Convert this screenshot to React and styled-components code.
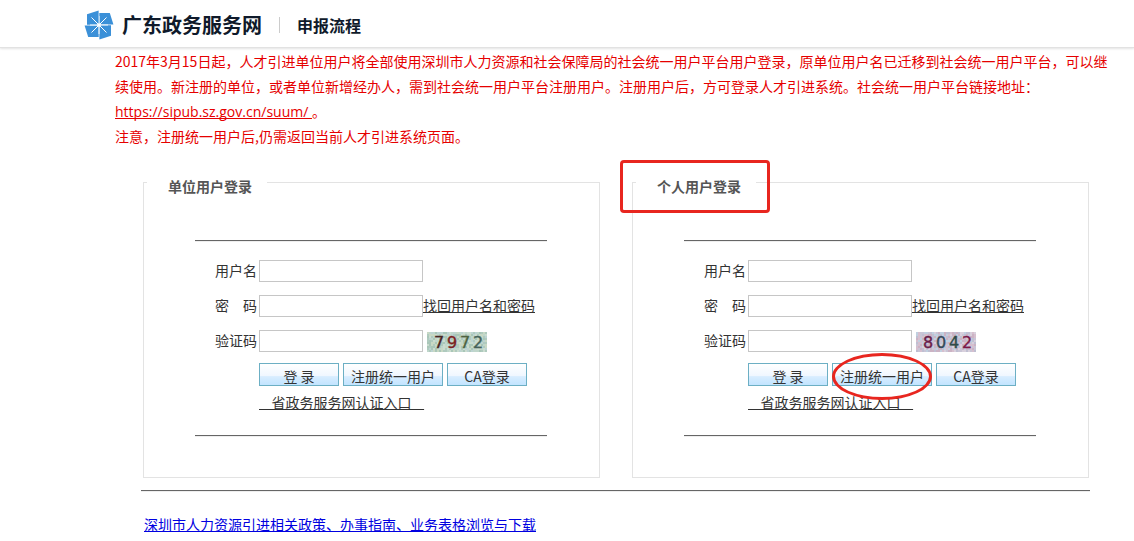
// lib
import React, { Fragment } from "react";
import styled, { createGlobalStyle } from "styled-components";

const GlobalStyle = createGlobalStyle`
  * {
    box-sizing: border-box;
  }
  body {
    margin: 0;
    background: #fff;
    color: #333;
    font-family: "Noto Sans CJK SC", sans-serif;
    font-size: 14px;
    line-height: 20px;
  }
  a {
    text-decoration-skip-ink: none;
    text-underline-offset: 1px;
  }
`;

// header
const HeaderWrapper = styled.header`
  display: flex;
  align-items: center;
  height: 48px;
  padding: 2px 84px 0;
  border-bottom: 1px solid #e2e2e2;
  box-shadow: 0 1px 2px #e4e4e4;
`;
const SiteName = styled.h1`
  margin: 0 17px 0 8px;
  color: #0f1a2b;
  font-size: 20px;
  line-height: 30px;
`;
const PageName = styled.h2`
  margin: 0;
  padding-left: 17px;
  border-left: 1px solid #ccc;
  color: #0f1a2b;
  font-size: 16px;
  line-height: 16px;
`;

// notice
const Notice = styled.section`
  padding: 1px 24px 0 115px;
  color: #e60000;
  line-height: 25px;
`;
const NoticeText = styled.p`
  margin: 0;
`;
const NoticeLink = styled.a`
  color: inherit;
  font-family: "Open Sans", "Noto Sans CJK SC", sans-serif;
`;

// login panels
const Main = styled.main`
  padding: 0 44px 0 141px;
`;
const Panels = styled.div`
  display: grid;
  grid-template-columns: 1fr 1fr;
  gap: 32px;
  margin: 19px 1px 12px 2px;
`;
const Panel = styled.fieldset`
  min-width: 0;
  margin: 0;
  padding: 44px 52px 40px 3px;
  border: 1px solid #e3e3e3;
`;
const PanelTitle = styled.legend`
  position: relative;
  padding: 8px 15px 0 21px;
  color: #555;
  font-weight: bold;
  line-height: 20px;
`;
const TitleMark = styled.span`
  position: absolute;
  inset: -8px -14px -17px -16px;
  border: 3px solid #e8261f;
  border-radius: 4px;
`;
const Rule = styled.hr`
  height: 2px;
  margin: 0;
  border: 0;
  border-top: 1px solid #666;
  border-bottom: 1px solid #eee;
`;
const LoginForm = styled.form`
  margin-left: 48px;
`;
const Fields = styled.div`
  display: grid;
  gap: 13px;
  padding: 18px 0 11px 20px;
`;
const Field = styled.div`
  display: flex;
  height: 22px;
`;
const FieldLabel = styled.label`
  width: 44px;
  white-space: pre;
`;
const TextInput = styled.input`
  width: 164px;
  height: 22px;
  padding: 0 4px;
  border: 1px solid #c6c6c6;
  font: inherit;
`;
const FindLink = styled.a`
  color: #333;
`;
const CaptchaImage = styled.svg`
  align-self: flex-end;
  margin-left: 4px;
`;
const Actions = styled.div`
  display: flex;
  gap: 4px;
  padding-left: 64px;
`;
const ButtonSlot = styled.div`
  position: relative;
`;
const Button = styled.button`
  display: block;
  width: ${({ $wide }) => ($wide ? 100 : 80)}px;
  height: 23px;
  padding: 2px 0 0;
  border: 1px solid #6cafc4;
  background: linear-gradient(#fff, #f0f7ff 55%, #d8edff 60%, #c2e4ff);
  color: #333;
  font: inherit;
  white-space: nowrap;
`;
const ButtonMark = styled.span`
  position: absolute;
  inset: -10px 0 -14px;
  border: 3px solid #e8261f;
  border-radius: 50%;
  pointer-events: none;
`;
const Entrance = styled.div`
  padding: 6px 0 23px 64px;
`;
const EntranceLink = styled.a`
  color: #333;
`;

// footer
const FooterLink = styled.a`
  display: inline-block;
  margin: 22px 0 0 3px;
  color: #0000e0;
`;

const LOGO_ANGLES = [0, 90, 180, 270];

const Logo = () => (
  <svg width="30" height="30" viewBox="-15 -15 30 30" aria-hidden="true">
    {LOGO_ANGLES.map((angle) => (
      <g key={angle} transform={`rotate(${angle})`}>
        <path d="M0.3 -12H10.8L14.4 -0.4H0.3Z" fill="#3b90d8" />
        <path d="M1 -1L7.5 -7.5" stroke="#fff" strokeWidth="1" />
        <path d="M0 -1V-9" stroke="#fff" strokeWidth="0.9" />
      </g>
    ))}
    <circle r="1.8" fill="#fff" />
  </svg>
);

// 60x20 の背景ノイズ
const makeNoise = (seed, colors) => {
  let value = seed;
  return Array.from({ length: 300 }, (_, index) => {
    value = (value * 16807) % 2147483647;
    return {
      x: (index % 30) * 2,
      y: Math.floor(index / 30) * 2,
      fill: colors[value % colors.length],
    };
  });
};

const Captcha = ({ digits, inks, noise, seed }) => (
  <CaptchaImage width="60" height="20" role="img" aria-label="验证码">
    {makeNoise(seed, noise).map(({ x, y, fill }) => (
      <rect key={`${x}-${y}`} x={x} y={y} width="2" height="2" fill={fill} />
    ))}
    {digits.split("").map((digit, index) => (
      <text
        key={index}
        x={7 + index * 13}
        y="16"
        fill={inks[index]}
        stroke={inks[index]}
        strokeWidth="0.4"
        fontFamily="DejaVu Sans, sans-serif"
        fontSize="16"
      >
        {digit}
      </text>
    ))}
  </CaptchaImage>
);

const PANELS = [
  {
    id: "unit",
    title: "单位用户登录",
    marked: false,
    captcha: {
      digits: "7972",
      inks: ["#4a2622", "#7c1f22", "#4d6440", "#456258"],
      noise: ["#bfd6cb", "#afcabe", "#cadccf", "#bcd3d2", "#c8d8c4", "#a9c6b8"],
      seed: 7972,
    },
  },
  {
    id: "person",
    title: "个人用户登录",
    marked: true,
    captcha: {
      digits: "8042",
      inks: ["#6b1c49", "#34495a", "#2f4b48", "#7c1747"],
      noise: ["#c9c5d6", "#d6bfce", "#c0d0e0", "#cbb3c4", "#d8d0dc", "#bfbfd2"],
      seed: 8042,
    },
  },
];

const LoginPanel = ({ id, title, marked, captcha }) => (
  <Panel>
    <PanelTitle>
      {title}
      {marked && <TitleMark />}
    </PanelTitle>
    <LoginForm onSubmit={(e) => e.preventDefault()}>
      <Rule />
      <Fields>
        <Field>
          <FieldLabel htmlFor={`${id}-name`}>用户名</FieldLabel>
          <TextInput id={`${id}-name`} type="text" />
        </Field>
        <Field>
          <FieldLabel htmlFor={`${id}-password`}>{"密\u3000码"}</FieldLabel>
          <TextInput id={`${id}-password`} type="password" />
          <FindLink href="#find">找回用户名和密码</FindLink>
        </Field>
        <Field>
          <FieldLabel htmlFor={`${id}-code`}>验证码</FieldLabel>
          <TextInput id={`${id}-code`} type="text" />
          <Captcha {...captcha} />
        </Field>
      </Fields>
      <Actions>
        <Button type="submit">登 录</Button>
        <ButtonSlot>
          <Button type="button" $wide>
            注册统一用户
          </Button>
          {marked && <ButtonMark />}
        </ButtonSlot>
        <Button type="button">CA登录</Button>
      </Actions>
      <Entrance>
        <EntranceLink href="#entrance">
          {"\u00a0\u00a0\u00a0\u00a0省政务服务网认证入口\u00a0\u00a0\u00a0\u00a0"}
        </EntranceLink>
      </Entrance>
      <Rule />
    </LoginForm>
  </Panel>
);

const App = () => (
  <Fragment>
    <GlobalStyle />
    <HeaderWrapper>
      <Logo />
      <SiteName>广东政务服务网</SiteName>
      <PageName>申报流程</PageName>
    </HeaderWrapper>
    <Notice>
      <NoticeText>
        2017年3月15日起，人才引进单位用户将全部使用深圳市人力资源和社会保障局的社会统一用户平台用户登录，原单位用户名已迁移到社会统一用户平台，可以继续使用。新注册的单位，或者单位新增经办人，需到社会统一用户平台注册用户。注册用户后，方可登录人才引进系统。社会统一用户平台链接地址：
        <br />
        <NoticeLink href="https://sipub.sz.gov.cn/suum/">
          https://sipub.sz.gov.cn/suum/&nbsp;
        </NoticeLink>
        。
      </NoticeText>
      <NoticeText>注意，注册统一用户后,仍需返回当前人才引进系统页面。</NoticeText>
    </Notice>
    <Main>
      <Panels>
        {PANELS.map((panel) => (
          <LoginPanel key={panel.id} {...panel} />
        ))}
      </Panels>
      <Rule />
      <FooterLink href="#policy">
        深圳市人力资源引进相关政策、办事指南、业务表格浏览与下载
      </FooterLink>
    </Main>
  </Fragment>
);

export default App;
